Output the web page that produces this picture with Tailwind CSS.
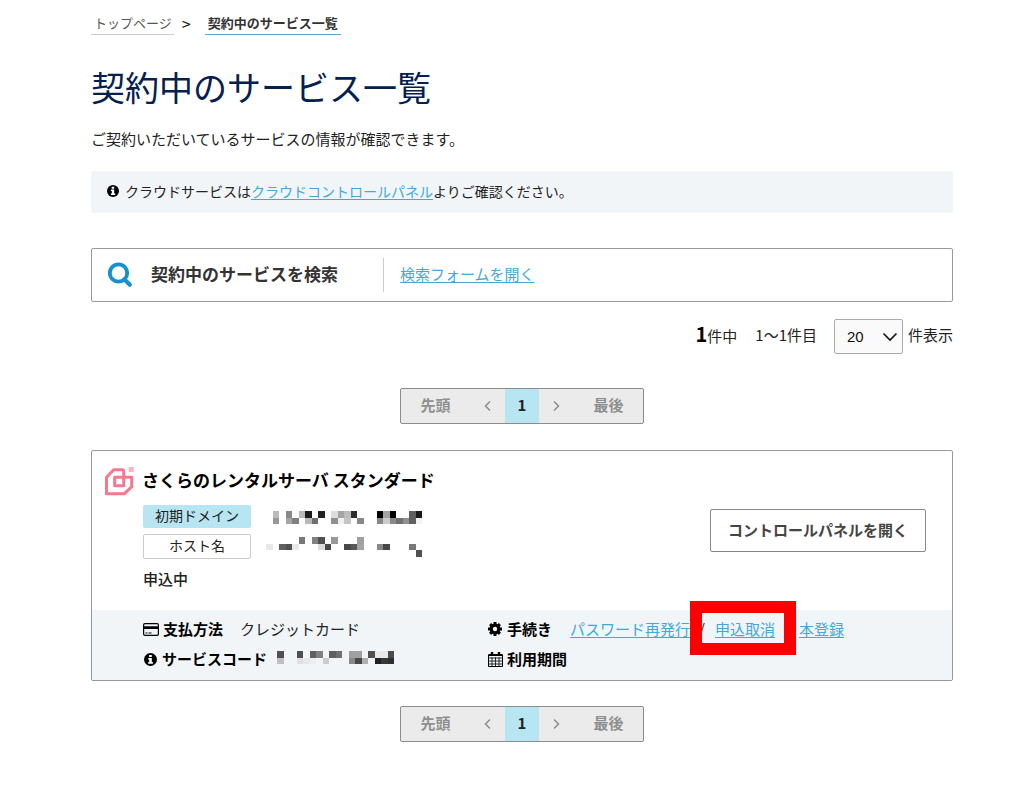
<!DOCTYPE html>
<html lang="ja">
<head>
<meta charset="utf-8">
<meta name="viewport" content="width=device-width, initial-scale=1">
<title>契約中のサービス一覧</title>
<script src="https://cdn.jsdelivr.net/npm/@tailwindcss/browser@4"></script>
</head>
<body class="bg-white pl-[91px] pr-[71px] pb-10 font-['Noto_Sans_CJK_JP',sans-serif] text-[15px] leading-6 text-[#222]">
<svg class="hidden" aria-hidden="true">
  <symbol id="info" viewBox="0 0 12 12"><circle cx="6" cy="6" r="6" fill="#000"/><path d="M4.700 1.800h2.500v1.900H4.700zM3.900 4.600h3.300v3.800h1v1.500H3.900V8.400h.9V6.100h-.9z" fill="#fff"/></symbol>
  <symbol id="prev" viewBox="0 0 8 10"><path d="M6 .5 1.500 5 6 9.500" fill="none" stroke="#8c8c8c" stroke-width="1.500"/></symbol>
  <symbol id="next" viewBox="0 0 8 10"><path d="M1 .5 5.500 5 1 9.500" fill="none" stroke="#8c8c8c" stroke-width="1.500"/></symbol>
</svg>

<nav aria-label="パンくずリスト" class="flex items-center pt-[11px] text-[13px] leading-[23px]">
  <a href="#" class="border-b border-[#ccc] pl-[3px] pr-[2px] text-[#555]">トップページ</a>
  <span class="w-[31px] pl-2 text-base leading-[23px] text-[#222]">&gt;</span>
  <a href="#" aria-current="page" class="border-b border-[#4bacd8] px-[3px] font-bold text-[#333]">契約中のサービス一覧</a>
</nav>

<main>
  <h1 class="mt-[27px] text-[34px] leading-[50px] text-[#03204f]">契約中のサービス一覧</h1>
  <p class="mt-[15px]">ご契約いただいているサービスの情報が確認できます。</p>

  <p class="mt-5 flex h-[42px] items-center rounded-xs bg-[#f1f5f8] pb-[3px] pl-4 text-sm">
    <svg class="mr-[6px] mt-px size-3"><use href="#info"/></svg>
    <span>クラウドサービスは<a href="#" class="text-[#3fa9d9] underline underline-offset-2">クラウドコントロールパネル</a>よりご確認ください。</span>
  </p>

  <section class="mt-[35px] flex h-[54px] items-center rounded-xs border border-[#98989c] pl-[15px]">
    <svg class="mr-[18px] size-[26px]" viewBox="0 0 26 26" fill="none" stroke="#1790d0" aria-hidden="true"><circle cx="11.500" cy="11" r="8.700" stroke-width="3.800"/><path d="M17.500 17.500l5.300 5.300" stroke-width="4.200" stroke-linecap="round"/></svg>
    <h2 class="w-[232px] pb-[2px] text-[17px] font-bold text-[#333]">契約中のサービスを検索</h2>
    <div class="flex h-[34px] items-center border-l border-[#ccc] pb-[3px] pl-4">
      <a href="#" class="text-[#3fa9d9] underline underline-offset-2">検索フォームを開く</a>
    </div>
  </section>

  <div class="mt-[17px] flex h-[35px] items-center justify-end">
    <span class="pb-[3px]"><b class="text-xl leading-6 text-black">1</b>件中</span>
    <span class="ml-[18px] pb-[3px]">1〜1件目</span>
    <label for="per" class="order-last ml-[5px] pb-[3px]">件表示</label>
    <div class="relative ml-[17px]">
      <select id="per" class="h-[35px] w-[69px] appearance-none rounded-xs border border-[#aaa] bg-[#fafafa] pl-3 font-['Liberation_Sans','Noto_Sans_CJK_JP',sans-serif] text-[#111]"><option>20</option></select>
      <svg class="pointer-events-none absolute right-[5px] top-[13px] h-[10px] w-4" viewBox="0 0 16 10"><path d="M1.500 1.500l6.500 6.500 6.500-6.500" fill="none" stroke="#111" stroke-width="1.600"/></svg>
    </div>
  </div>

  <nav aria-label="ページ送り（上）" class="mx-auto mt-[34px] flex h-9 w-[244px] items-stretch overflow-hidden rounded-xs border border-[#8c8c8c] bg-[#ebebeb] font-bold text-[#8f8f8f]">
    <button class="w-[69px] pb-[3px]">先頭</button>
    <button aria-label="前へ" class="flex w-[35px] items-center justify-center"><svg class="h-[10px] w-2"><use href="#prev"/></svg></button>
    <button aria-current="page" class="w-[34px] bg-[#b8e5f2] pb-[3px] text-[#222]">1</button>
    <button aria-label="次へ" class="flex w-[35px] items-center justify-center"><svg class="h-[10px] w-2"><use href="#next"/></svg></button>
    <button class="grow pb-[3px]">最後</button>
  </nav>

  <article class="mt-[26px] rounded-xs border border-[#98989c]">
    <div class="flex h-[159px] items-center pl-[13px] pr-[26px]">
      <div class="grow self-stretch pt-[15px]">
        <div class="flex items-start">
          <svg class="mr-2 mt-px size-[29px]" viewBox="0 0 29 29" fill="none" stroke="#f4788f" stroke-width="3" stroke-linejoin="round" aria-hidden="true"><path d="M1.500 26.700V10.200L8.700 2.800h8.500q1.500 0 1.500 1.500v14.500h-9V10.200H26.700v9.500l-7.200 7z"/><path d="M23.700 0h5v5h-5z" fill="#fbb5b5" stroke="none"/></svg>
          <h2 class="text-[17px] leading-[27px] font-bold text-black">さくらのレンタルサーバ スタンダード</h2>
        </div>
        <dl class="ml-[38px] mt-[9px] grid grid-cols-[108px_1fr] gap-x-[15px] gap-y-[6px]">
          <dt class="h-[23px] rounded-xs bg-[#b8e5f2] text-center text-sm leading-[21px]">初期ドメイン</dt>
          <dd aria-label="非表示" class="pt-[6px]"><svg id="domain" class="h-[13px] w-[156px]" shape-rendering="crispEdges"></svg></dd>
          <dt class="h-[25px] rounded-xs border border-[#ccc] text-center text-sm leading-[21px]">ホスト名</dt>
          <dd aria-label="非表示" class="pt-[3px]"><svg id="host" class="h-5 w-[156px]" shape-rendering="crispEdges"></svg></dd>
        </dl>
        <p class="ml-[38px] mt-2 font-medium text-[#222]">申込中</p>
      </div>
      <button class="h-[43px] w-[216px] rounded-xs border border-[#888] pb-px font-bold text-[#444]">コントロールパネルを開く</button>
    </div>
    <div class="grid h-[70px] grid-cols-[345px_1fr] content-center gap-y-[6px] bg-[#f1f5f8] pb-[2px] pl-[51px]">
      <p class="flex items-center">
        <svg class="mr-1 h-[13px] w-4" viewBox="0 0 16 13" aria-hidden="true"><rect x=".6" y=".6" width="14.800" height="11.800" rx="1.300" fill="none" stroke="#000" stroke-width="1.200"/><path d="M1 3.200h14v2.800H1zM2.500 9.500h2v1h-2zM5.500 9.500h3v1h-3z"/></svg>
        <b class="text-black">支払方法</b><span class="ml-[17px]">クレジットカード</span>
      </p>
      <p class="flex items-center">
        <svg class="mr-[5px] h-[14px] w-[14px]" viewBox="0 0 16 16" aria-hidden="true"><circle cx="8" cy="8" r="4.200" fill="none" stroke="#000" stroke-width="4"/><path d="M8 0v16M0 8h16M2.400 2.400l11.200 11.200M13.600 2.400 2.400 13.600" stroke="#000" stroke-width="3.400"/><circle cx="8" cy="8" r="2.500" fill="#f1f5f8"/></svg>
        <b class="text-black">手続き</b>
        <a href="#" class="ml-[18px] text-[#3fa9d9] underline underline-offset-2">パスワード再発行</a>
        <span class="relative flex w-[109px] pl-[9px]">
          <span class="w-4">/</span><a href="#" class="text-[#3fa9d9] underline underline-offset-2">申込取消</a>
          <span class="absolute -top-4 left-0 h-[54px] w-[106px] border-12 border-[#fe0000]"></span>
        </span>
        <a href="#" class="text-[#3fa9d9] underline underline-offset-2">本登録</a>
      </p>
      <p class="flex items-center">
        <svg class="ml-px mr-[5px] size-[13px]"><use href="#info"/></svg>
        <b class="text-black">サービスコード</b>
        <svg id="code" class="mb-1 ml-[10px] h-[13px] w-[117px]" shape-rendering="crispEdges" role="img" aria-label="非表示"></svg>
      </p>
      <p class="flex items-center">
        <svg class="mr-1 h-[15px] w-[15px]" viewBox="0 0 15 15" fill="none" stroke="#000" aria-hidden="true"><path d="M.5 3h14v11.500H.5z"/><path d="M.5 3h14" stroke-width="2"/><path d="M.5 6h14M.5 9h14M.5 12h14M4 5v9.500M7.500 5v9.500M11 5v9.500" stroke-width=".8"/><path d="M4 0v4M11 0v4" stroke-width="2.400"/></svg>
        <b class="text-black">利用期間</b>
      </p>
    </div>
  </article>

  <nav aria-label="ページ送り（下）" class="mx-auto mt-[25px] flex h-9 w-[244px] items-stretch overflow-hidden rounded-xs border border-[#8c8c8c] bg-[#ebebeb] font-bold text-[#8f8f8f]">
    <button class="w-[69px] pb-[2px]">先頭</button>
    <button aria-label="前へ" class="flex w-[35px] items-center justify-center"><svg class="h-[10px] w-2"><use href="#prev"/></svg></button>
    <button aria-current="page" class="w-[34px] bg-[#b8e5f2] pb-[2px] text-[#222]">1</button>
    <button aria-label="次へ" class="flex w-[35px] items-center justify-center"><svg class="h-[10px] w-2"><use href="#next"/></svg></button>
    <button class="grow pb-[2px]">最後</button>
  </nav>
</main>

<script>
// Masked values, drawn as rows of grey cells; ".." is an empty cell.
const mosaics = {
  domain: [
    ".. bb .. 88 fc b8 1a .. 22 .. dc a4 bc 2e .. .. .. 00 a4 00 .. .. 60 1a",
    ".. 98 .. a4 80 .. b8 70 .. .. 90 f0 c4 .. 88 .. .. 88 cc 88 70 90 60 f4"
  ],
  host: [
    ".. .. .. .. .. 78 .. 80 50 .. 98 .. .. .. a0",
    "e8 .. 60 50 e8 .. .. .. dc 48 .. .. 48 58 a4 .. .. 88 48 .. .. .. 78",
    ".. .. .. .. .. .. .. .. .. .. .. .. .. .. .. .. .. .. .. .. .. .. .. 50"
  ],
  code: [
    "50 .. .. 50 .. 60 80 .. 60 70 .. a0 a0 .. 50 e8 e8 4c",
    "c0 .. .. e0 e8 ee .. cc .. .. .. 88 48 b0 .. 20 38 30"
  ]
};
for (const [id, rows] of Object.entries(mosaics)) {
  let cells = "";
  rows.forEach((row, y) => row.split(" ").forEach((v, x) => {
    if (v === "..") return;
    const x0 = Math.round(x * 6.5), x1 = Math.round((x + 1) * 6.5);
    const y0 = Math.round(y * 6.5), y1 = Math.round((y + 1) * 6.5);
    cells += `<rect x="${x0}" y="${y0}" width="${x1 - x0}" height="${y1 - y0}" fill="#${v}${v}${v}"/>`;
  }));
  document.getElementById(id).innerHTML = cells;
}
</script>
</body>
</html>
